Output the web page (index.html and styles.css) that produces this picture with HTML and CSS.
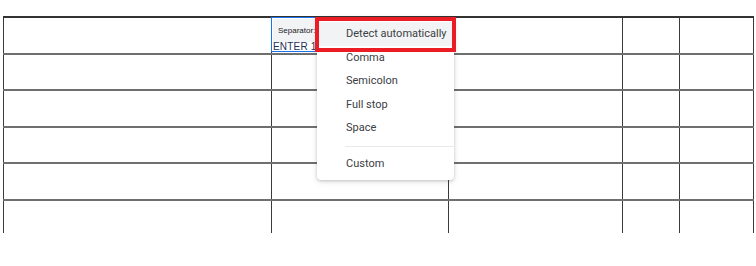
FILE: index.html
```html
<!DOCTYPE html>
<html>
<head>
<meta charset="utf-8">
<link rel="stylesheet" href="styles.css">
</head>
<body>
<div class="page">
  <div class="clip">
    <table class="grid">
      <colgroup>
        <col class="c1"><col class="c2"><col class="c3"><col class="c4"><col class="c5">
      </colgroup>
      <tr class="r"><td></td><td class="active"><div class="editor"><div class="sep-box"><span class="sep-label">Separator:</span></div><div class="enter">ENTER 1</div></div></td><td></td><td></td><td></td></tr>
      <tr class="r"><td></td><td></td><td></td><td></td><td></td></tr>
      <tr class="r"><td></td><td></td><td></td><td></td><td></td></tr>
      <tr class="r"><td></td><td></td><td></td><td></td><td></td></tr>
      <tr class="r"><td></td><td></td><td></td><td></td><td></td></tr>
      <tr class="r last"><td></td><td></td><td></td><td></td><td></td></tr>
    </table>
  </div>
  <div class="menu">
    <div class="item hl">Detect automatically</div>
    <div class="item">Comma</div>
    <div class="item">Semicolon</div>
    <div class="item">Full stop</div>
    <div class="item">Space</div>
    <div class="divider"></div>
    <div class="item">Custom</div>
  </div>
  <div class="redbox"></div>
</div>
</body>
</html>
```

FILE: styles.css
```css
html, body {
  margin: 0;
  padding: 0;
  background: #ffffff;
}
body {
  width: 756px;
  height: 266px;
  overflow: hidden;
  font-family: Roboto, "Liberation Sans", Arial, sans-serif;
}
.page {
  position: relative;
  width: 756px;
  height: 266px;
  padding: 16px 0 0 3px;
  box-sizing: border-box;
}
.clip {
  height: 217px;
  overflow: hidden;
}
.grid {
  border-collapse: collapse;
  table-layout: fixed;
  width: 750px;
}
.c1 { width: 268px; }
.c2 { width: 177px; }
.c3 { width: 174px; }
.c4 { width: 57px; }
.c5 { width: 74px; }
.grid td {
  border-left: 1px solid #3a3a3a;
  border-right: 1px solid #3a3a3a;
  border-top: 2px solid #6f6f6f;
  height: 34.6px;
  padding: 0;
  vertical-align: top;
}
.grid tr:first-child td {
  border-top: 2px solid #333333;
}
.grid tr.last td {
  height: 40px;
}
.grid td.active {
  position: relative;
}
.editor {
  position: absolute;
  left: -1px;
  top: -1px;
  width: 176px;
  height: 35px;
  border: 1px solid #1a73e8;
  box-sizing: border-box;
  overflow: hidden;
  background: #fff;
}
.sep-box {
  margin: 1px 0 0 1px;
  width: 44px;
  height: 23px;
  background: #f1f3f4;
  display: flex;
  align-items: center;
}
.sep-label {
  font-family: "Liberation Sans", Arial, sans-serif;
  font-size: 8px;
  color: #202124;
  padding-left: 5px;
}
.enter {
  font-family: "Liberation Sans", Arial, sans-serif;
  font-size: 10px;
  line-height: 9px;
  color: #20305a;
  padding-left: 1px;
  letter-spacing: 0.2px;
  white-space: nowrap;
}
.menu {
  position: absolute;
  left: 317px;
  top: 17px;
  width: 137px;
  height: 163px;
  background: #ffffff;
  border-radius: 4px;
  box-shadow: 0 1px 3px rgba(60, 64, 67, 0.25), 0 2px 6px rgba(60, 64, 67, 0.12);
  padding-top: 5px;
  box-sizing: border-box;
}
.item {
  height: 23.6px;
  line-height: 23.6px;
  padding-left: 29px;
  font-size: 11px;
  color: #3c4043;
  white-space: nowrap;
}
.item.hl {
  background: #f1f3f4;
}
.divider {
  height: 1px;
  background: #e8eaed;
  margin: 6px 0 5px 28px;
}
.redbox {
  position: absolute;
  left: 315px;
  top: 17px;
  width: 141px;
  height: 35px;
  border: 4px solid #ec1c24;
  box-sizing: border-box;
}
```
